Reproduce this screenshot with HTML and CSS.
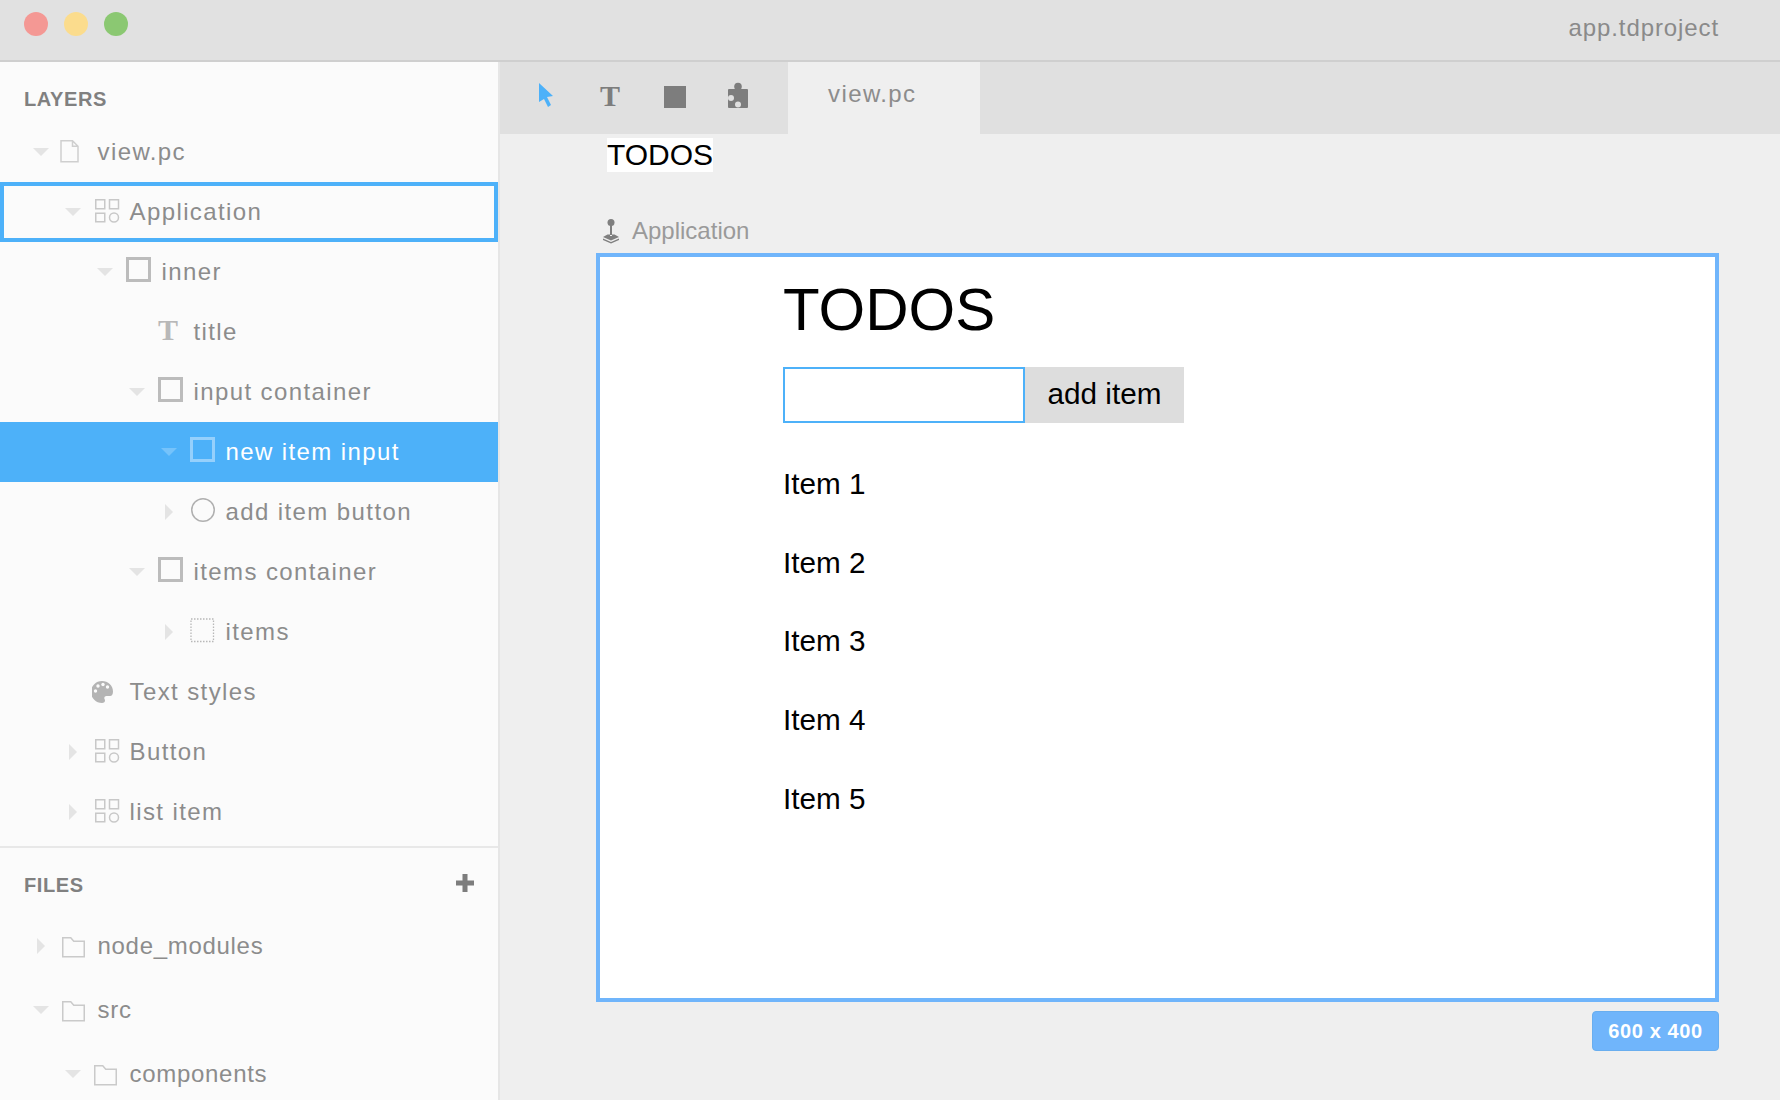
FILE: index.html
```html
<!DOCTYPE html>
<html lang="en">

<head>
    <meta charset="UTF-8">
    <title>app.tdproject</title>
    <link rel="stylesheet" href="styles.css">
</head>

<body>
    <!-- Shared icons -->
    <svg class="defs" width="0" height="0">
        <symbol id="arrow-down" viewBox="0 0 16 16"><polygon points="0,4 16,4 8,12" /></symbol>
        <symbol id="arrow-right" viewBox="0 0 16 16"><polygon points="4,0 12,8 4,16" /></symbol>
        <symbol id="i-file" viewBox="0 0 28 28">
            <path d="M1 4.750h11.500l5.500 5.500v15.500h-17z M12.500 4.750v5.500h5.500" fill="none" stroke="#cfcfcf" stroke-width="1.500" />
        </symbol>
        <symbol id="i-grid" viewBox="0 0 28 28">
            <g fill="none" stroke="#c8c8c8" stroke-width="1.500">
                <rect x="3.750" y="3.750" width="9" height="9" />
                <rect x="17.500" y="3.750" width="9" height="9" />
                <rect x="3.750" y="17.250" width="9" height="8.500" />
                <circle cx="22" cy="21.500" r="4.500" />
            </g>
        </symbol>
        <symbol id="i-square" viewBox="0 0 28 28">
            <rect x="3.500" y="2.500" width="22" height="22" fill="none" stroke="currentColor" stroke-width="3" />
        </symbol>
        <symbol id="i-circle" viewBox="0 0 28 28">
            <circle cx="15" cy="14" r="11.250" fill="none" stroke="#b0b0b0" stroke-width="1.500" />
        </symbol>
        <symbol id="i-dotted" viewBox="0 0 28 28">
            <rect x="3" y="3" width="22.500" height="22.500" fill="none" stroke="#b8b8b8" stroke-width="1.300" stroke-dasharray="1.500 1.500" />
        </symbol>
        <symbol id="i-palette" viewBox="0 0 28 28">
            <path d="M10 5a11 11 0 1 0 0 22c2 0 3-1 3-2.500 0-1-.7-1.500-.7-2.500 0-1.200 1-2 2.200-2H18c2 0 3-2 3-4.500C21 9.500 16 5 10 5z" fill="#b4b4b4" />
            <g fill="#fbfbfb">
                <circle cx="3.500" cy="15" r="1.700" />
                <circle cx="6" cy="10" r="1.700" />
                <circle cx="11" cy="8.500" r="1.700" />
                <circle cx="15.500" cy="11" r="1.700" />
            </g>
        </symbol>
        <symbol id="i-folder" viewBox="0 0 28 28">
            <path d="M2.750 7.750h8l3 3.500h10.500v15.500h-21.500z" fill="none" stroke="#cacaca" stroke-width="1.500" />
        </symbol>
    </svg>

    <div id="titlebar">
        <span class="light red"></span>
        <span class="light yellow"></span>
        <span class="light green"></span>
        <span class="project">app.tdproject</span>
    </div>

    <div id="main">
        <!-- Left panel -->
        <div id="sidebar">
            <div class="panel-head layers-head">LAYERS</div>

            <div class="row d0"><svg class="arrow"><use href="#arrow-down" /></svg><svg class="ico"><use href="#i-file" /></svg><span>view.pc</span></div>
            <div class="row d1 focused"><svg class="arrow"><use href="#arrow-down" /></svg><svg class="ico"><use href="#i-grid" /></svg><span>Application</span></div>
            <div class="row d2"><svg class="arrow"><use href="#arrow-down" /></svg><svg class="ico"><use href="#i-square" /></svg><span>inner</span></div>
            <div class="row d3"><span class="arrow"></span><span class="ico ico-t">T</span><span>title</span></div>
            <div class="row d3"><svg class="arrow"><use href="#arrow-down" /></svg><svg class="ico"><use href="#i-square" /></svg><span>input container</span></div>
            <div class="row d4 selected"><svg class="arrow"><use href="#arrow-down" /></svg><svg class="ico"><use href="#i-square" /></svg><span>new item input</span></div>
            <div class="row d4"><svg class="arrow"><use href="#arrow-right" /></svg><svg class="ico"><use href="#i-circle" /></svg><span>add item button</span></div>
            <div class="row d3"><svg class="arrow"><use href="#arrow-down" /></svg><svg class="ico"><use href="#i-square" /></svg><span>items container</span></div>
            <div class="row d4"><svg class="arrow"><use href="#arrow-right" /></svg><svg class="ico"><use href="#i-dotted" /></svg><span>items</span></div>
            <div class="row d1"><span class="arrow"></span><svg class="ico"><use href="#i-palette" /></svg><span>Text styles</span></div>
            <div class="row d1"><svg class="arrow"><use href="#arrow-right" /></svg><svg class="ico"><use href="#i-grid" /></svg><span>Button</span></div>
            <div class="row d1"><svg class="arrow"><use href="#arrow-right" /></svg><svg class="ico"><use href="#i-grid" /></svg><span>list item</span></div>

            <div class="panel-head files-head">
                <span>FILES</span>
                <svg class="plus" width="18" height="18" viewBox="0 0 18 18"><path d="M6.500 0h5v6.500H18v5h-6.500V18h-5v-6.500H0v-5h6.500z" /></svg>
            </div>

            <div class="row file d0"><svg class="arrow"><use href="#arrow-right" /></svg><svg class="ico"><use href="#i-folder" /></svg><span>node_modules</span></div>
            <div class="row file d0"><svg class="arrow"><use href="#arrow-down" /></svg><svg class="ico"><use href="#i-folder" /></svg><span>src</span></div>
            <div class="row file d1"><svg class="arrow"><use href="#arrow-down" /></svg><svg class="ico"><use href="#i-folder" /></svg><span>components</span></div>
        </div>

        <!-- Editor -->
        <div id="editor">
            <div id="toolbar">
                <div class="tools">
                    <svg class="tool" viewBox="0 0 32 32"><polygon points="9,3 23,16 17,17 21,25 18,27 14,19 9,22" fill="#4db1f9" /></svg>
                    <span class="tool tool-t">T</span>
                    <svg class="tool" viewBox="0 0 32 32"><rect x="6" y="6" width="22" height="22" fill="#7d7d7d" /></svg>
                    <svg class="tool" viewBox="0 0 32 32">
                        <circle cx="16" cy="6.500" r="3.800" fill="#7d7d7d" />
                        <rect x="6" y="9" width="20" height="19" rx="1" fill="#7d7d7d" />
                        <circle cx="9" cy="18" r="3" fill="#e0e0e0" />
                        <circle cx="16" cy="24.500" r="3" fill="#e0e0e0" />
                    </svg>
                </div>
                <div class="tab">view.pc</div>
            </div>

            <div id="canvas">
                <div class="chip">TODOS</div>
                <div class="frame-label">
                    <svg width="20" height="26" viewBox="0 0 20 26">
                        <circle cx="9" cy="4.500" r="3.500" fill="#7f7f7f" />
                        <rect x="8" y="7" width="2" height="10" fill="#7f7f7f" />
                        <path d="M1 19 5.500 16.500H8v1.500h2v-1.500h2.500L17 19l-8 3.500z" fill="#7f7f7f" />
                        <path d="M1 20.500 9 24l8-3.500V22l-8 3.500L1 22z" fill="#7f7f7f" />
                    </svg>
                    <span>Application</span>
                </div>

                <div class="frame">
                    <h1>TODOS</h1>
                    <div class="new-item">
                        <input type="text">
                        <button>add item</button>
                    </div>
                    <ul class="items">
                        <li>Item 1</li>
                        <li>Item 2</li>
                        <li>Item 3</li>
                        <li>Item 4</li>
                        <li>Item 5</li>
                    </ul>
                </div>

                <div class="size-row"><div class="size-badge">600 x 400</div></div>
            </div>
        </div>
    </div>
</body>

</html>
```

FILE: styles.css
```css
html,
body {
    margin: 0px;
    padding: 0px;
    height: 1100px;
    overflow: hidden;
    font-family: "Liberation Sans", Arial, sans-serif;
    background: #efefef;
}

.defs {
    position: absolute;
}

/* Title bar */
#titlebar {
    height: 48px;
    background: #e1e1e1;
    border-bottom: 2px solid #cfcfcf;
    display: flex;
    align-items: flex-start;
    gap: 16px;
    padding: 12px 61px 0px 24px;
}

.light {
    width: 24px;
    height: 24px;
    border-radius: 50%;
}

.red {
    background: #f49894;
}

.yellow {
    background: #fbdc8d;
}

.green {
    background: #8bc872;
}

.project {
    margin-left: auto;
    font-size: 24px;
    line-height: 32px;
    letter-spacing: 0.9px;
    color: #8a8a8a;
}

#main {
    display: flex;
    height: 1038px;
}

/* Left panel */
#sidebar {
    width: 498px;
    flex-shrink: 0;
    background: #fbfbfb;
    border-right: 2px solid #e6e6e6;
    overflow: hidden;
}

.panel-head {
    display: flex;
    justify-content: space-between;
    align-items: center;
    font-size: 20px;
    font-weight: bold;
    letter-spacing: 0.6px;
    color: #808080;
    padding: 0px 24px;
}

.layers-head {
    height: 60px;
    padding-top: 14px;
    box-sizing: border-box;
}

.files-head {
    height: 68px;
    margin-top: 4px;
    padding-top: 8px;
    padding-right: 24px;
    box-sizing: border-box;
    border-top: 2px solid #e8e8e8;
}

.plus {
    fill: #7d7d7d;
    margin-bottom: 4px;
}

.row {
    display: flex;
    align-items: center;
    height: 60px;
    font-size: 24px;
    letter-spacing: 1.4px;
    color: #8c8c8c;
}

.row.file {
    height: 64px;
    letter-spacing: 0.7px;
}

.d0 {
    padding-left: 33px;
}

.d1 {
    padding-left: 65px;
}

.d2 {
    padding-left: 97px;
}

.d3 {
    padding-left: 129px;
}

.d4 {
    padding-left: 161px;
}

.arrow {
    width: 16px;
    height: 16px;
    margin-right: 11px;
    fill: #e4e4e4;
    flex-shrink: 0;
}

.ico {
    width: 28px;
    height: 28px;
    margin-right: 9.5px;
    margin-bottom: 4px;
    flex-shrink: 0;
    color: #bcbcbc;
    overflow: visible;
}

.ico-t {
    font-family: "Liberation Serif", serif;
    font-weight: bold;
    font-size: 30px;
    line-height: 28px;
    padding-left: 2px;
    box-sizing: border-box;
    letter-spacing: 0px;
    color: #b8b8b8;
}

.focused {
    outline: 4px solid #4db1f9;
    outline-offset: -4px;
}

.selected {
    background: #4db1f9;
    color: #fff;
}

.selected .arrow {
    fill: #75c3fb;
}

.selected .ico {
    color: #95d0fc;
}

/* Editor */
#editor {
    flex: 1;
    min-width: 0;
    display: flex;
    flex-direction: column;
}

#toolbar {
    height: 72px;
    flex-shrink: 0;
    background: #e0e0e0;
    display: flex;
}

.tools {
    width: 288px;
    padding-left: 30px;
    padding-top: 18px;
    box-sizing: border-box;
    display: flex;
    gap: 32px;
}

.tool {
    width: 32px;
    height: 32px;
    flex-shrink: 0;
}

.tool-t {
    font-family: "Liberation Serif", serif;
    font-weight: bold;
    font-size: 30px;
    line-height: 32px;
    text-align: center;
    color: #7d7d7d;
}

.tab {
    width: 192px;
    box-sizing: border-box;
    padding-left: 40px;
    background: #efefef;
    font-size: 24px;
    line-height: 64px;
    letter-spacing: 1.4px;
    color: #8c8c8c;
}

#canvas {
    flex: 1;
    padding: 4px 61px 0px 96px;
    background: #efefef;
}

.chip {
    display: inline-block;
    margin-left: 11px;
    background: #fff;
    color: #000;
    font-size: 30px;
    line-height: 34px;
    vertical-align: top;
}

.frame-label {
    display: flex;
    align-items: center;
    height: 28px;
    margin-top: 45px;
    margin-bottom: 8px;
    padding-left: 6px;
    gap: 10px;
    font-size: 24px;
    color: #9a9a9a;
}

.frame {
    height: 749px;
    box-sizing: border-box;
    border: 4px solid #70b5fb;
    background: #fff;
    padding: 18px 0px 0px 183px;
}

h1 {
    margin: 0px;
    font-size: 60px;
    font-weight: normal;
    line-height: 70px;
    color: #000;
}

.new-item {
    display: flex;
    margin-top: 22px;
}

input {
    width: 242px;
    height: 56px;
    box-sizing: border-box;
    margin: 0px;
    padding: 0px;
    border: 2px solid #4db1f9;
    background: #fff;
    outline: none;
}

button {
    width: 159px;
    height: 56px;
    margin: 0px;
    padding: 0px 0px 2px 0px;
    border: none;
    background: #ddd;
    color: #000;
    font-family: inherit;
    font-size: 29.7px;
}

.items {
    list-style: none;
    margin: 22px 0px 0px 0px;
    padding: 0px;
}

.items li {
    height: 78.7px;
    line-height: 78.7px;
    font-size: 29.7px;
    color: #000;
}

.size-row {
    display: flex;
    justify-content: flex-end;
    margin-top: 9px;
}

.size-badge {
    width: 127px;
    height: 40px;
    box-sizing: border-box;
    border: 1px solid #69aeef;
    border-radius: 4px;
    background: #70b5fb;
    color: #fff;
    text-align: center;
    font-size: 20px;
    font-weight: bold;
    letter-spacing: 0.6px;
    line-height: 38px;
}
```
